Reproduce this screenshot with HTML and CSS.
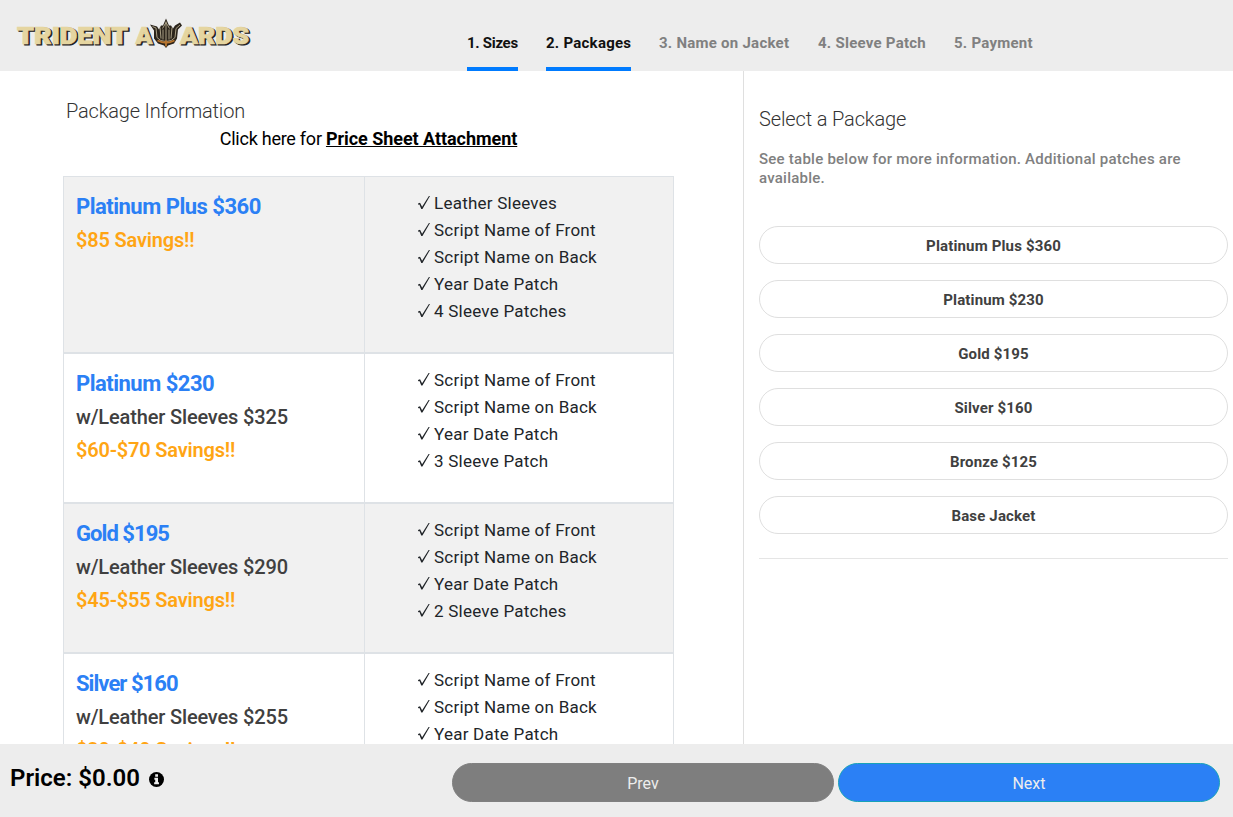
FILE: index.html
```html
<!DOCTYPE html>
<html lang="en">

<head>
  <meta charset="utf-8">
  <title>Trident Awards</title>
  <link rel="stylesheet" href="styles.css">
</head>

<body>
  <div class="header">
    <svg class="logo" viewBox="0 0 240 34">
      <g class="logoShadow">
        <text x="3.5" y="27.3" textLength="111" lengthAdjust="spacingAndGlyphs">TRIDENT</text>
        <text x="122" y="27.3" textLength="17" lengthAdjust="spacingAndGlyphs">A</text>
        <text x="166.5" y="27.3" textLength="69" lengthAdjust="spacingAndGlyphs">ARDS</text>
      </g>
      <g class="logoText">
        <text x="2" y="26" textLength="111" lengthAdjust="spacingAndGlyphs">TRIDENT</text>
        <text x="120.5" y="26" textLength="17" lengthAdjust="spacingAndGlyphs">A</text>
        <text x="165" y="26" textLength="69" lengthAdjust="spacingAndGlyphs">ARDS</text>
      </g>
      <g transform="translate(135 .5)">
        <path d="M0 6 L7 8 L9 11 L11 7 L13 7 L16 0 L19 7 L21 7 L23 10 L25 7 L30 4 L32 7 L28 11 L27 20 L24 25 L18 27 L16 29.5 L14 27 L8 25 L4 20 L4 12 Z" fill="#2b241b" />
        <path d="M2.5 8 L6 9.5 L7 19 Q10 23 16 23 Q22 23 25 19 L26 10 L30 6.5 M16 3 V26 M10 9 L11 20 M13 11 V21 M19 11 V21 M22 9 L21 20 M12.5 10 L16 4 L19.5 10" fill="none" stroke="#b5ab90" stroke-width=".9" />
        <path d="M7.5 22 Q16 26.5 24.5 22 M16 22 V28" fill="none" stroke="#b8742c" stroke-width="1.8" />
      </g>
    </svg>
    <div class="steps">
      <a class="step active s1">1. Sizes</a>
      <a class="step active s2">2. Packages</a>
      <a class="step s3">3. Name on Jacket</a>
      <a class="step s4">4. Sleeve Patch</a>
      <a class="step s5">5. Payment</a>
    </div>
  </div>

  <div class="mainContent">
    <div class="info">
      <h4 class="title">Package Information</h4>
      <p class="sheet">Click here for <a>Price Sheet Attachment</a></p>
      <table class="packages">
        <tr class="odd first">
          <td>
            <h3>Platinum Plus $360</h3>
            <h5 class="savings">$85 Savings!!</h5>
          </td>
          <td>
            <ul>
              <li>Leather Sleeves</li>
              <li>Script Name of Front</li>
              <li>Script Name on Back</li>
              <li>Year Date Patch</li>
              <li>4 Sleeve Patches</li>
            </ul>
          </td>
        </tr>
        <tr>
          <td>
            <h3>Platinum $230</h3>
            <h5>w/Leather Sleeves $325</h5>
            <h5 class="savings">$60-$70 Savings!!</h5>
          </td>
          <td>
            <ul>
              <li>Script Name of Front</li>
              <li>Script Name on Back</li>
              <li>Year Date Patch</li>
              <li>3 Sleeve Patch</li>
            </ul>
          </td>
        </tr>
        <tr class="odd">
          <td>
            <h3 class="tight">Gold $195</h3>
            <h5>w/Leather Sleeves $290</h5>
            <h5 class="savings">$45-$55 Savings!!</h5>
          </td>
          <td>
            <ul>
              <li>Script Name of Front</li>
              <li>Script Name on Back</li>
              <li>Year Date Patch</li>
              <li>2 Sleeve Patches</li>
            </ul>
          </td>
        </tr>
        <tr>
          <td>
            <h3 class="tight">Silver $160</h3>
            <h5>w/Leather Sleeves $255</h5>
            <h5 class="savings">$30-$40 Savings!!</h5>
          </td>
          <td>
            <ul>
              <li>Script Name of Front</li>
              <li>Script Name on Back</li>
              <li>Year Date Patch</li>
            </ul>
          </td>
        </tr>
      </table>
    </div>

    <div class="select">
      <h4 class="title">Select a Package</h4>
      <p class="note">See table below for more information. Additional patches are<br>available.</p>
      <div class="options">
        <button>Platinum Plus $360</button>
        <button>Platinum $230</button>
        <button>Gold $195</button>
        <button>Silver $160</button>
        <button>Bronze $125</button>
        <button>Base Jacket</button>
      </div>
    </div>
  </div>

  <div class="footer">
    <div class="price">
      <span>Price: $0.00</span>
      <svg class="infoIcon" viewBox="0 0 14 14">
        <circle cx="7" cy="7" r="7" fill="#000" />
        <path d="M5.8 2.2h2.6v2.2H5.8z M5 5.4h3.4v4.2h.9v1.8H4.8V9.6h1V7.2H5z" fill="#ededed" />
      </svg>
    </div>
    <div class="navBtns">
      <button class="prev">Prev</button>
      <button class="next">Next</button>
    </div>
  </div>
</body>

</html>
```
FILE: styles.css
```css
* {
  box-sizing: border-box;
}

body {
  margin: 0;
  height: 817px;
  overflow: hidden;
  display: flex;
  flex-direction: column;
  font-family: Roboto, "Liberation Sans", sans-serif;
  color: #212529;
  background: #fff;
}

h3, h4, h5, p, ul {
  margin: 0;
  padding: 0;
}

button {
  font-family: inherit;
}

.header {
  display: flex;
  flex: none;
  height: 71px;
  background: #ededed;
}

.logo {
  width: 240px;
  height: 34px;
  margin: 18px 0 0 15px;
}

.logo text {
  font-size: 23.5px;
  font-weight: 900;
}

.logoShadow {
  fill: #222;
  stroke: #222;
  stroke-width: 1px;
}

.logoText {
  fill: #e5d5a0;
  stroke: #e5d5a0;
  stroke-width: .7px;
}

.steps {
  display: flex;
  gap: 28px;
  margin-left: 212px;
}

.step {
  height: 71px;
  padding-top: 33px;
  line-height: 20px;
  font-size: 15px;
  font-weight: 700;
  letter-spacing: .25px;
  white-space: nowrap;
  color: #808080;
}

.step.active {
  color: #111;
  border-bottom: 4px solid #007bff;
}

.s1 {
  width: 51px;
  letter-spacing: -.3px;
}

.s2 {
  width: 85px;
}

.s3 {
  width: 131px;
}

.s4 {
  width: 108px;
}

.mainContent {
  display: flex;
  flex: 1;
  min-height: 0;
}

.info {
  width: 743px;
  padding: 28px 0 0 63px;
  overflow: hidden;
}

.title {
  font-size: 20px;
  font-weight: 300;
  line-height: 24px;
  letter-spacing: -.19px;
  color: #333;
}

.info .title {
  padding-left: 3px;
}

.select .title {
  letter-spacing: -.14px;
}

.sheet {
  width: 611px;
  padding-top: 2px;
  line-height: 27px;
  font-size: 18px;
  letter-spacing: -.25px;
  text-align: center;
  color: #000;
}

.sheet a {
  font-weight: 700;
  letter-spacing: -.05px;
  text-decoration: underline;
}

.packages {
  width: 611px;
  margin-top: 24px;
  border-collapse: collapse;
  table-layout: fixed;
}

.packages tr {
  height: 150px;
}

.packages .first {
  height: 176px;
}

.packages td {
  padding: 13px 12px 12px;
  vertical-align: top;
  border: 1px solid #dee2e6;
  border-bottom-width: 2px;
}

.packages td:first-child {
  width: 301px;
}

.odd {
  background: #f1f1f1;
}

.packages h3 {
  height: 34px;
  line-height: 34px;
  font-size: 22px;
  font-weight: 700;
  letter-spacing: -.5px;
  color: #2b80f5;
}

.packages .tight {
  letter-spacing: -.95px;
}

.packages h5 {
  height: 33px;
  line-height: 33px;
  font-size: 20px;
  font-weight: 500;
  letter-spacing: -.15px;
  color: #404040;
}

.packages .savings {
  font-weight: 600;
  letter-spacing: -.19px;
  color: #ffa514;
}

.packages ul {
  list-style: none;
  padding-left: 40px;
}

.packages li {
  display: flex;
  height: 27px;
  line-height: 27px;
  font-size: 17px;
  letter-spacing: .24px;
  white-space: nowrap;
}

/* check mark */
.packages li::before {
  content: "";
  width: 12px;
  height: 13px;
  margin: 6px 4px 0 1px;
  background: #212529;
  clip-path: polygon(0 58%, 17% 52%, 34% 82%, 91% 0, 100% 0, 37% 100%, 27% 100%, 12% 65%, 2% 67%);
}

.select {
  flex: 1;
  padding: 36px 5px 0 15px;
  border-left: 1px solid #dfdfdf;
}

.note {
  margin-top: 19px;
  line-height: 19px;
  font-size: 15px;
  font-weight: 500;
  letter-spacing: .24px;
  white-space: nowrap;
  color: #808080;
}

.options {
  display: flex;
  flex-direction: column;
  gap: 16px;
  padding: 38px 0 24px;
  border-bottom: 1px solid #e5e5e5;
}

.options button {
  height: 38px;
  padding: 2px 0 0;
  border: 1px solid #dfdfdf;
  border-radius: 19px;
  background: #fff;
  font-size: 15px;
  font-weight: 700;
  letter-spacing: .15px;
  color: #404040;
}

.footer {
  display: flex;
  flex: none;
  height: 73px;
  background: #ededed;
}

.price {
  display: flex;
  width: 452px;
  padding: 19px 0 0 10px;
  line-height: 30px;
  font-size: 24px;
  font-weight: 600;
  color: #000;
}

.price span {
  width: 139px;
  white-space: nowrap;
}

.infoIcon {
  width: 15px;
  height: 15px;
  margin-top: 9px;
}

.navBtns {
  display: flex;
  gap: 4px;
  padding-top: 19px;
}

.navBtns button {
  width: 382px;
  height: 39px;
  padding: 2px 0 0;
  border: 1px solid #808080;
  border-radius: 20px;
  background: #7e7e7e;
  font-size: 16px;
  font-weight: 400;
  color: #ededed;
}

.navBtns .next {
  border-color: #17a2b8;
  background: #2b80f5;
}
```
